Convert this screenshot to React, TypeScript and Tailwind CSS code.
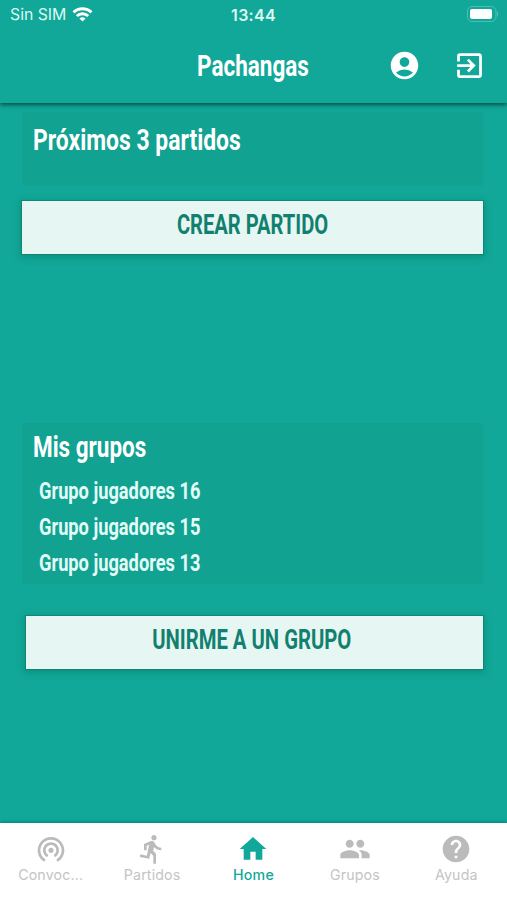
import React from 'react';
import { MdAccountCircle, MdDirectionsRun, MdExitToApp, MdGroup, MdHelp, MdHome, MdWifiTethering } from 'react-icons/md';

const tabs = [
  { label: 'Convoc...', icon: MdWifiTethering, active: false },
  { label: 'Partidos', icon: MdDirectionsRun, active: false },
  { label: 'Home', icon: MdHome, active: true },
  { label: 'Grupos', icon: MdGroup, active: false },
  { label: 'Ayuda', icon: MdHelp, active: false },
];

const groups = ['Grupo jugadores 16', 'Grupo jugadores 15', 'Grupo jugadores 13'];

const condensed = 'block w-max whitespace-nowrap font-bold leading-[36px]';

const StatusBar = () => (
  <div className="grid h-[30px] grid-cols-3 items-center pl-[10px] pr-[8px] font-['Inter',sans-serif] text-[#dcf8f3]">
    <div className="flex items-center gap-[6px]">
      <span className="text-[15.8px] leading-[30px]">Sin SIM</span>
      <svg className="-mt-[2px] h-[15px] w-[21px]" viewBox="0 0 20 15" fill="none" stroke="white" strokeWidth="2.9">
        <path d="M1 5.4a13 13 0 0 1 18 0" />
        <path d="M4.3 9a8.3 8.3 0 0 1 11.4 0" />
        <path d="M10 14.6 6.9 11.6a4.5 4.5 0 0 1 6.2 0Z" fill="white" stroke="none" />
      </svg>
    </div>
    <span className="-ml-[2px] text-center text-[16px] font-semibold leading-[30px] tracking-[0.3px]">13:44</span>
    <svg className="-mt-[2px] ml-auto h-[16px] w-[33px]" viewBox="0 0 33 16">
      <rect x="1.5" y="0.5" width="28.5" height="15" rx="4.5" fill="none" stroke="#4dbfb1" />
      <rect x="4" y="3" width="22" height="10" rx="2" fill="white" />
      <path d="M31 5.5c1.6.8 1.6 4.2 0 5Z" fill="#4dbfb1" />
    </svg>
  </div>
);

const Header = () => (
  <header className="relative h-[103px] shrink-0 bg-[#11a899] shadow-[0_2px_4px_rgba(0,60,50,0.8)]">
    <StatusBar />
    <div className="grid h-[71px] grid-cols-[1fr_113px_1fr] items-center">
      <h1 className={`${condensed} col-start-2 origin-left scale-x-[0.75] pt-px text-[30px] text-white`}>Pachangas</h1>
      <div className="flex items-center justify-end gap-[32px] pr-[21.5px] text-white">
        <MdAccountCircle className="size-[33px]" />
        <MdExitToApp className="size-[33px]" />
      </div>
    </div>
  </header>
);

const ActionButton = ({ children, className }: { children: React.ReactNode; className: string }) => (
  <button className={`flex h-[53px] justify-center bg-[#e6f6f3] pt-[6px] text-[27px] text-[#12806f] shadow-[0_0_0_1px_rgba(20,120,100,0.6),0_2px_7px_2px_rgba(0,120,100,0.45)] ${className}`}>
    {children}
  </button>
);

export default function App() {
  return (
    <div className="flex h-[900px] w-[507px] flex-col overflow-hidden bg-[#11a899] font-['Roboto',sans-serif]">
      <Header />

      <main className="flex flex-1 flex-col pl-[22px] pr-[24px]">
        <section className="mt-[9px] h-[74px] rounded-[4px] bg-[#11a292] pl-[11px] pt-[10px]">
          <h2 className={`${condensed} origin-left scale-x-[0.79] text-[29px] text-white`}>Próximos 3 partidos</h2>
        </section>

        <ActionButton className="mt-[15px]">
          <span className={`${condensed} origin-center scale-x-[0.745]`}>CREAR PARTIDO</span>
        </ActionButton>

        <section className="mt-[169px] h-[161px] rounded-[4px] bg-[#11a292] pl-[11px] pt-[6px]">
          <h2 className={`${condensed} origin-left scale-x-[0.775] text-[29px] text-white`}>Mis grupos</h2>
          <ul className="pl-[5.5px] pt-[7.5px]">
            {groups.map((group) => (
              <li key={group} className="h-[36.4px]">
                <span className={`${condensed} origin-left scale-x-[0.745] text-[24.5px] text-[#e2fbf6]`}>{group}</span>
              </li>
            ))}
          </ul>
        </section>

        <ActionButton className="ml-[4px] mt-[32px] pr-[5px]">
          <span className={`${condensed} origin-center scale-x-[0.75]`}>UNIRME A UN GRUPO</span>
        </ActionButton>
      </main>

      <nav className="grid h-[77px] grid-cols-5 bg-white pt-[10px] font-['Inter',sans-serif] shadow-[0_-1px_3px_rgba(0,90,80,0.5)]">
        {tabs.map(({ label, icon: Icon, active }) => (
          <div key={label} className={`flex flex-col items-center ${active ? 'text-[#11a899]' : 'text-[#bbbbbb]'}`}>
            <Icon className="size-[32px]" />
            <span className={`text-[14.2px] leading-[20px] ${active ? 'font-medium tracking-[0.2px]' : 'tracking-[0.15px] text-[#c4c4c4]'}`}>{label}</span>
          </div>
        ))}
      </nav>
    </div>
  );
}
